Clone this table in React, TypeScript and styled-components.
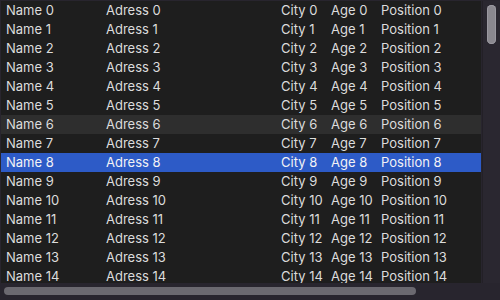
import React from "react";
import styled, { createGlobalStyle } from "styled-components";

const Global = createGlobalStyle`
  html, body { margin: 0; padding: 0; background: #28252e; }
  body { font-family: Inter, "Liberation Sans", sans-serif; }
`;

const Frame = styled.div`
  width: 500px;
  height: 300px;
  display: grid;
  grid-template-columns: 1fr 18px;
  grid-template-rows: 1fr 17px;
  background: #28252e;
  box-sizing: border-box;
  padding: 1px 0 0 1px;
`;

const Viewport = styled.div`
  overflow: hidden;
  background: #1e1e1e;
  margin-right: 1px;
`;

const Row = styled.div<{ $state?: "hover" | "selected" }>`
  display: grid;
  grid-template-columns: 100px 175px 50px 50px 120px;
  height: 19px;
  align-items: center;
  background: ${(p) =>
    p.$state === "selected" ? "#2d5bc7" : p.$state === "hover" ? "#2e2e2e" : "transparent"};
  color: ${(p) => (p.$state === "selected" ? "#f2f2f5" : "#dcdcdc")};
`;

const Cell = styled.div`
  padding-left: 5px;
  font-size: 13px;
  white-space: nowrap;
  overflow: hidden;
  line-height: 19px;
`;

const VTrack = styled.div`
  background: #2a2730;
  border-left: 1px solid #232027;
  padding: 4px 4px 0 4px;
`;

const VThumb = styled.div`
  width: 9px;
  height: 39px;
  border-radius: 5px;
  background: #8a888f;
  box-shadow: inset 0 0 0 1px #9a98a0;
`;

const HTrack = styled.div`
  background: #28252e;
  padding: 4px 0 0 3px;
`;

const HThumb = styled.div`
  width: 412px;
  height: 8px;
  border-radius: 4px;
  background: #6b6970;
`;

const Corner = styled.div`
  background: #28252e;
`;

const rows = Array.from({ length: 15 }, (_, i) => i);

export default function App() {
  return (
    <>
      <Global />
      <Frame>
        <Viewport>
          {rows.map((i) => (
            <Row key={i} $state={i === 6 ? "hover" : i === 8 ? "selected" : undefined}>
              <Cell>Name {i}</Cell>
              <Cell>Adress {i}</Cell>
              <Cell>City {i}</Cell>
              <Cell>Age {i}</Cell>
              <Cell>Position {i}</Cell>
            </Row>
          ))}
        </Viewport>
        <VTrack>
          <VThumb />
        </VTrack>
        <HTrack>
          <HThumb />
        </HTrack>
        <Corner />
      </Frame>
    </>
  );
}
